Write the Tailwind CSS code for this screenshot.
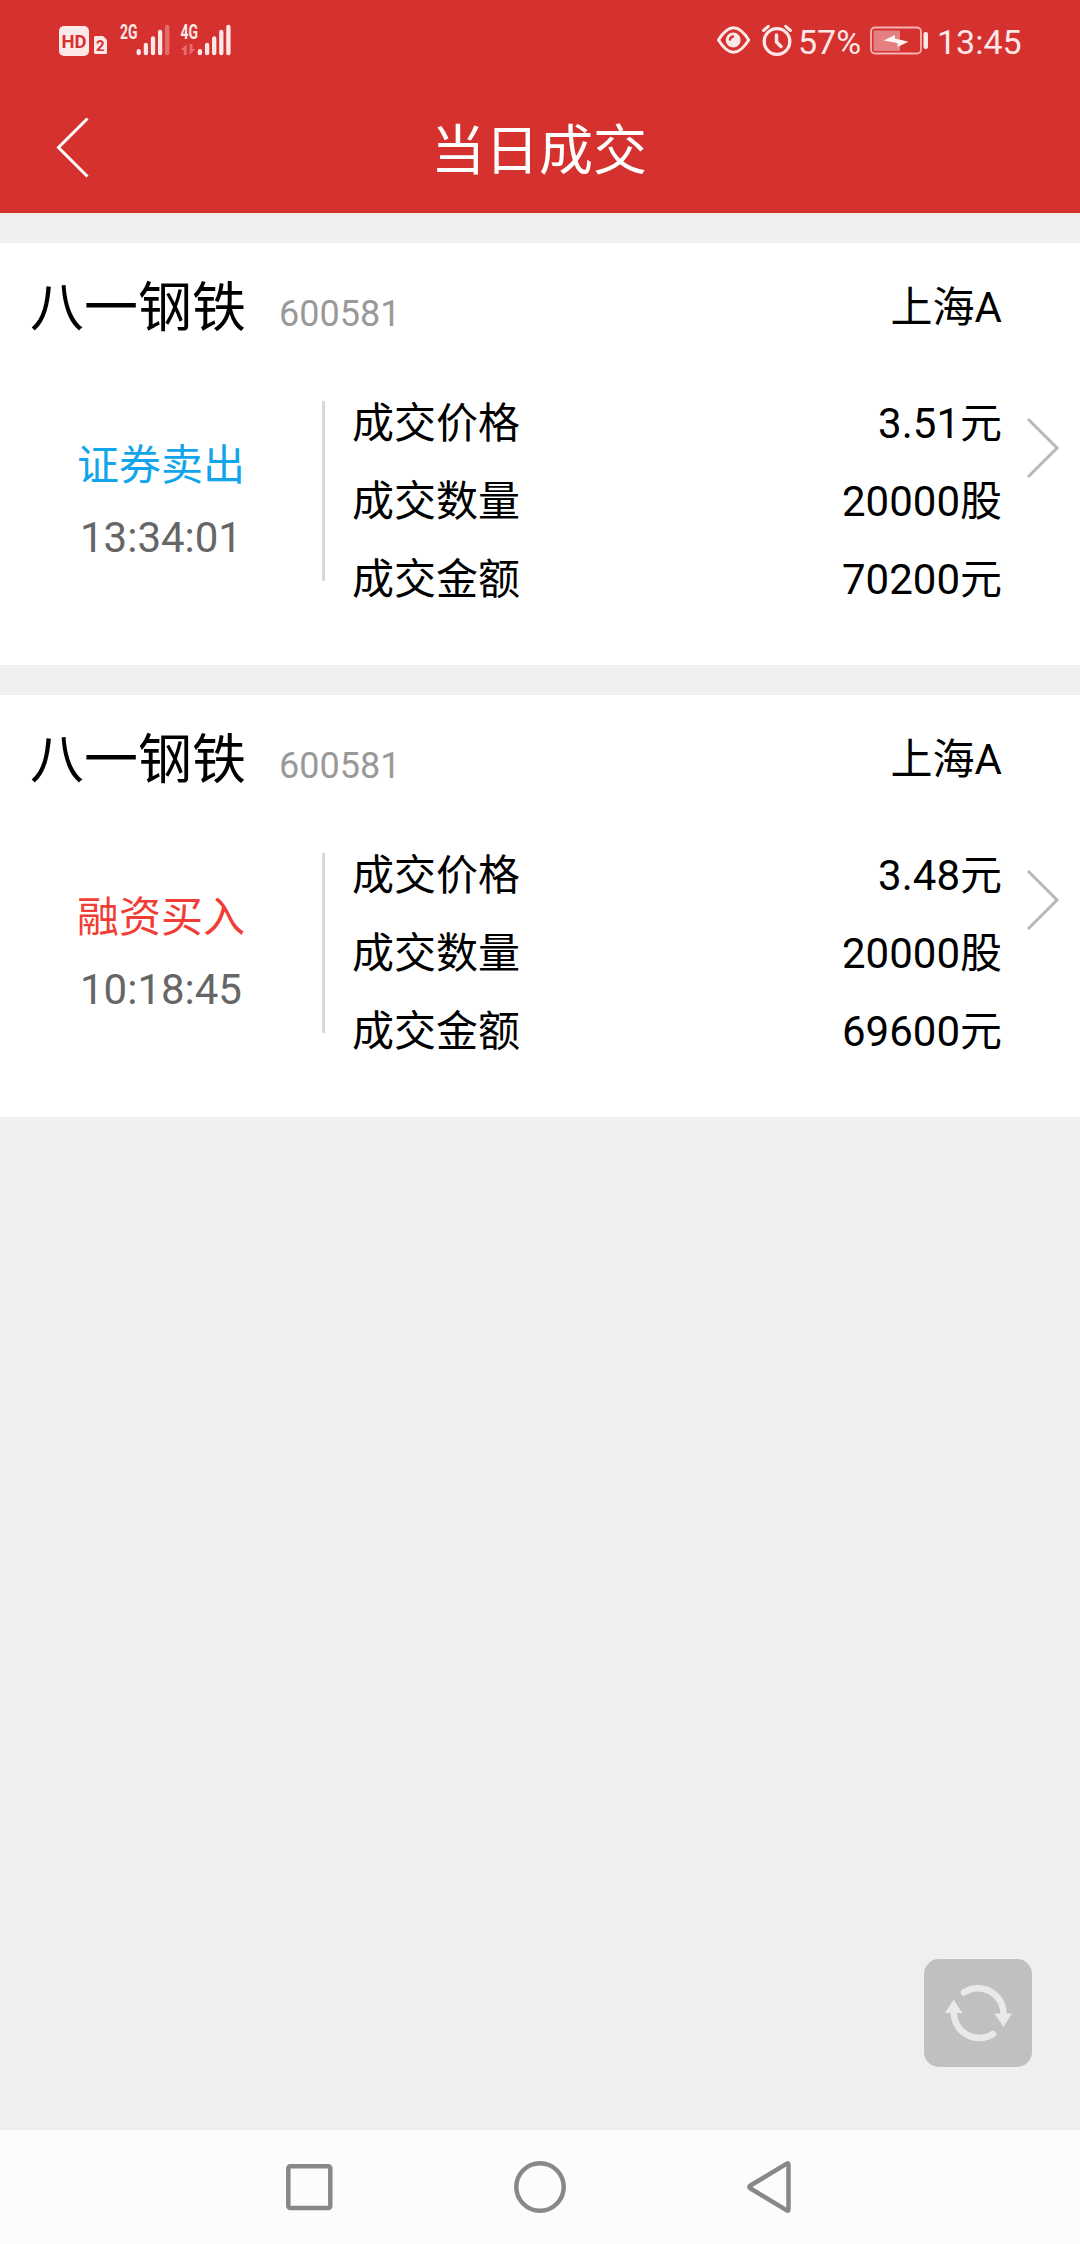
<!doctype html>
<html lang="zh-CN">
<head>
  <meta charset="UTF-8">
  <meta name="viewport" content="width=device-width, initial-scale=1.0">
  <title>当日成交</title>
  <script src="https://cdn.jsdelivr.net/npm/@tailwindcss/browser@4"></script>
</head>
<body class="bg-[#efefef]">
<div class="relative flex flex-col h-[2244px] w-[1080px] overflow-hidden font-[Roboto,'Noto_Sans_CJK_SC',sans-serif] text-[42px] leading-[60px] text-black">
    <!--Header-->
    <header class="bg-[#d4312f] h-[213px] text-white">
        <!--Status bar-->
        <div class="flex justify-between h-20 pl-[59px] pr-[59px]">
            <svg class="w-[180px] h-20" viewBox="59 0 180 80" fill="#fde8e8">
                <rect x="59" y="26" width="30" height="30" rx="5"/>
                <text x="61.5" y="47.5" font-family="Roboto" font-size="19" font-weight="700" textLength="25" lengthAdjust="spacingAndGlyphs" fill="#d4312f">HD</text>
                <path d="M95.5 36H103L107 40V52.500Q107 54 105.500 54H95.500Q94 54 94 52.500V37.500Q94 36 95.500 36Z"/>
                <text x="96" y="51" font-family="Roboto" font-size="15" font-weight="700" fill="#d4312f">2</text>
                <text x="120" y="38.500" font-family="Roboto" font-size="19.500" font-weight="700" textLength="17.500" lengthAdjust="spacingAndGlyphs">2G</text>
                <text x="180.500" y="38.500" font-family="Roboto" font-size="19.500" font-weight="700" textLength="17.500" lengthAdjust="spacingAndGlyphs">4G</text>
                <g stroke="#fde8e8" stroke-width="4.300" stroke-linecap="round">
                    <path d="M138.700 51.200V53.200M145.900 45V53.200M153 38.500V53.200M160.100 32V53.200"/>
                    <path d="M167.200 27V53.200" stroke="#e76c6c"/>
                    <path d="M199.900 51.200V53.200M207.100 45V53.200M214.200 38.500V53.200M221.300 32V53.200M228.400 27V53.200"/>
                </g>
                <path d="M186.800 44V55H183.800V50H180.800ZM189.500 44H192.500V49H195.500L189.500 55Z" fill="#e76c6c"/>
            </svg>
            <div class="flex items-center text-[34px] leading-10 text-[#fde8e8]">
                <svg class="w-[82px] h-20" viewBox="715 0 82 80" fill="none" stroke="#fde8e8">
                    <path d="M718.500 40Q733.500 15.500 748.700 40Q733.500 64.500 718.500 40Z" stroke-width="3" stroke-linejoin="round"/>
                    <circle cx="733.200" cy="40" r="7.500" fill="#fde8e8" stroke="none"/>
                    <path d="M730 39.500Q730.500 37 733 36.500" stroke="#d4312f" stroke-width="2.300" stroke-linecap="round"/>
                    <circle cx="777" cy="41.500" r="12.800" stroke-width="3.300"/>
                    <path d="M776.500 35V42L781 46.500" stroke-width="3.500" stroke-linecap="round" stroke-linejoin="round"/>
                    <path d="M763.500 30.500L768.300 26.300M785.700 26.300L790.500 30.500" stroke-width="3" stroke-linecap="round"/>
                </svg>
                <span class="w-[73px] pl-px pt-1 whitespace-nowrap">57%</span>
                <svg class="w-[60px] h-20" viewBox="870 0 60 80">
                    <rect x="871" y="27.500" width="50" height="26" rx="4" fill="none" stroke="#f6b4b4" stroke-width="1.800"/>
                    <rect x="873.500" y="30.500" width="26.500" height="20.500" rx="1" fill="#e68080"/>
                    <rect x="923.500" y="32" width="4.500" height="17" rx="2" fill="#fde8e8"/>
                    <path d="M883.500 40.500L895 35V38.500L908.500 41.800L897.500 47V43Z" fill="#fff3f3"/>
                </svg>
                <span class="w-[91px] pl-[7px] pt-1 whitespace-nowrap">13:45</span>
            </div>
        </div>
        <!--Title bar-->
        <div class="flex items-center h-[133px] px-[54px]">
            <svg class="w-10 h-[66px] mt-px" viewBox="0 0 40 66" fill="none" stroke="#fff" stroke-width="3">
                <path d="M33.500 4.500L4.500 33.500L33.500 62.500"/>
            </svg>
            <h1 class="grow text-center text-[54px] leading-[80px] pt-2.5 pr-[42px]">当日成交</h1>
        </div>
    </header>

    <!--Deals-->
    <main class="grow flex flex-col gap-[30px] pt-[30px]">
        <section class="bg-white h-[422px] pl-[30px] pr-5">
            <div class="flex items-baseline h-[143px] pt-[25px] pr-[58px]">
                <span class="relative top-px text-[54px] leading-[80px]">八一钢铁</span>
                <span class="ml-[33px] text-4xl text-[#999999]">600581</span>
                <span class="ml-auto relative -top-1">上海A</span>
            </div>
            <div class="flex">
                <div class="w-[262px] pt-11 text-center leading-[72px]">
                    <div class="text-[#12a5eb]">证券卖出</div>
                    <div class="text-[#666666]">13:34:01</div>
                </div>
                <div class="ml-[30px] mt-[15px] w-[3px] h-[180px] bg-[#d8d8d8]"></div>
                <div class="ml-[27px] w-[650px] leading-[78px] -mt-px">
                    <div class="flex justify-between"><span>成交价格</span><span>3.51元</span></div>
                    <div class="flex justify-between"><span>成交数量</span><span>20000股</span></div>
                    <div class="flex justify-between"><span>成交金额</span><span>70200元</span></div>
                </div>
                <svg class="ml-[22px] mt-[30px] w-9 h-16" viewBox="0 0 36 64" fill="none" stroke="#b8b8b8" stroke-width="3">
                    <path d="M4 3L33 32L4 61"/>
                </svg>
            </div>
        </section>
        <section class="bg-white h-[422px] pl-[30px] pr-5">
            <div class="flex items-baseline h-[143px] pt-[25px] pr-[58px]">
                <span class="relative top-px text-[54px] leading-[80px]">八一钢铁</span>
                <span class="ml-[33px] text-4xl text-[#999999]">600581</span>
                <span class="ml-auto relative -top-1">上海A</span>
            </div>
            <div class="flex">
                <div class="w-[262px] pt-11 text-center leading-[72px]">
                    <div class="text-[#f03e36]">融资买入</div>
                    <div class="text-[#666666]">10:18:45</div>
                </div>
                <div class="ml-[30px] mt-[15px] w-[3px] h-[180px] bg-[#d8d8d8]"></div>
                <div class="ml-[27px] w-[650px] leading-[78px] -mt-px">
                    <div class="flex justify-between"><span>成交价格</span><span>3.48元</span></div>
                    <div class="flex justify-between"><span>成交数量</span><span>20000股</span></div>
                    <div class="flex justify-between"><span>成交金额</span><span>69600元</span></div>
                </div>
                <svg class="ml-[22px] mt-[30px] w-9 h-16" viewBox="0 0 36 64" fill="none" stroke="#b8b8b8" stroke-width="3">
                    <path d="M4 3L33 32L4 61"/>
                </svg>
            </div>
        </section>
    </main>

    <!--Floating refresh button-->
    <button class="absolute right-12 bottom-[177px] size-[108px] rounded-[15px] bg-[#c0c0c0]">
        <svg class="size-[108px]" viewBox="0 0 108 108" fill="none" stroke="#e9e9e9" stroke-width="6.500" stroke-linecap="round">
            <path d="M40 33.500A25.500 25.500 0 0 1 79.500 56"/>
            <path d="M69 75A25.500 25.500 0 0 1 29.800 52"/>
            <path d="M70.500 54.500H88L79.500 68ZM21 54L29.700 40.500L38.500 54Z" fill="#e9e9e9" stroke="none"/>
        </svg>
    </button>

    <!--Navigation bar-->
    <nav class="flex items-center justify-center h-[114px] bg-[#fcfcfc]">
        <svg class="w-[540px] h-[114px]" viewBox="270 2130 540 114" fill="none" stroke="#888888" stroke-width="4.500" stroke-linejoin="round">
            <rect x="288.300" y="2166.200" width="42" height="41.800" rx="2"/>
            <circle cx="540" cy="2187" r="23.700"/>
            <path d="M786.800 2163.600Q788.500 2162.500 788.500 2165V2209Q788.500 2211.500 786.800 2210.400L750.500 2188.500Q748 2187 750.500 2185.500Z"/>
        </svg>
    </nav>
</div>
</body>
</html>
